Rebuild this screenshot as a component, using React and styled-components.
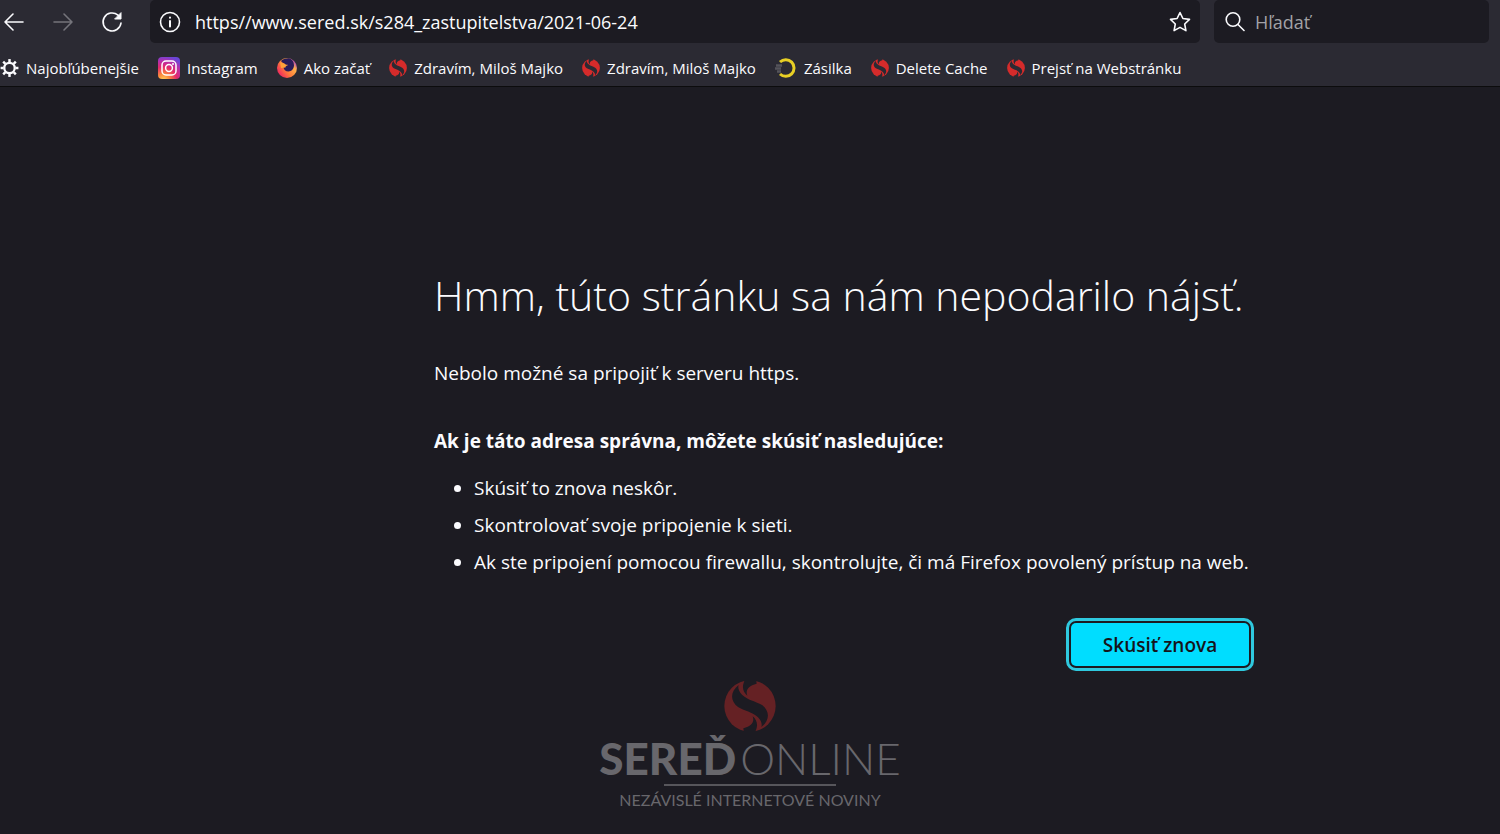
import React from "react";
import styled, { createGlobalStyle } from "styled-components";

const GlobalStyle = createGlobalStyle`
  * {
    box-sizing: border-box;
  }
  body {
    margin: 0;
    background: #1c1b22;
    color: #fbfbfe;
    font-family: "Open Sans", "Noto Sans", sans-serif;
  }
`

const Chrome = styled.header`
  background: #2b2a33;
  border-bottom: 1px solid #0c0c0d;
`

const Toolbar = styled.div`
  display: flex;
  align-items: center;
  height: 43px;
  padding-right: 11px;
`

const NavButtons = styled.div`
  display: flex;
  flex: none;
  gap: 21px;
  width: 150px;
`

const IconButton = styled.button`
  display: flex;
  align-items: center;
  justify-content: center;
  width: 28px;
  height: 28px;
  padding: 0;
  border: 0;
  background: none;
  color: ${props => props.disabled ? '#75747b' : '#fbfbfe'};
`

const Field = styled.label`
  display: flex;
  align-items: center;
  flex: ${props => props.width ? `0 0 ${props.width}` : '1'};
  gap: ${props => props.gap || '8px'};
  height: 43px;
  padding: 0 6px 0 9px;
  margin-left: ${props => props.width ? '14px' : '0'};
  border-radius: 5px;
  background: #1c1b22;
  input {
    flex: 1;
    min-width: 0;
    padding: 0;
    border: 0;
    outline: 0;
    background: none;
    color: #fbfbfe;
    font-family: inherit;
    font-size: 18px;
  }
  input::placeholder {
    color: #a2a2a6;
    opacity: 1;
  }
`

const Bookmarks = styled.nav`
  display: flex;
  align-items: center;
  gap: 19px;
  height: 43px;
  padding-top: 6px;
`

const Bookmark = styled.a`
  display: flex;
  align-items: center;
  gap: 7px;
  color: #fbfbfe;
  font-size: 15px;
  line-height: 24px;
  text-decoration: none;
  white-space: nowrap;
  svg {
    flex: none;
  }
`

const Main = styled.main`
  max-width: 1008px;
  margin: 0 auto;
  padding: 178px 0 0 188px;
`

const Title = styled.h1`
  margin: 0;
  font-size: 41px;
  font-weight: 300;
  line-height: 60px;
  white-space: nowrap;
`

const Text = styled.p`
  margin: ${props => props.$strong ? '40px 0 0' : '34px 0 0'};
  font-size: 19px;
  font-weight: ${props => props.$strong ? 700 : 400};
  line-height: 28px;
`

const Tips = styled.ul`
  margin: 15px 0 0;
  padding-left: 40px;
  font-size: 19px;
  line-height: 37px;
  white-space: nowrap;
`

const Actions = styled.div`
  display: flex;
  justify-content: flex-end;
  margin-top: 37px;
  padding: 5px;
`

const RetryButton = styled.button`
  width: 178px;
  height: 43px;
  border: 0;
  border-radius: 5px;
  background: #00ddff;
  color: #15141a;
  font-family: inherit;
  font-size: 19px;
  font-weight: 600;
  outline: 3px solid #2fc9df;
  outline-offset: 2px;
`

const Footer = styled.footer`
  display: flex;
  flex-direction: column;
  align-items: center;
  padding-top: 9px;
  color: #68676c;
  font-family: Lato, sans-serif;
`

const Brand = styled.div`
  display: flex;
  gap: 4px;
  font-size: 44px;
  line-height: 52px;
  font-weight: 300;
  strong {
    font-weight: 900;
  }
`

const Rule = styled.div`
  width: 172px;
  height: 2px;
  background: #57565b;
`

const Tagline = styled.div`
  font-size: 16px;
  line-height: 28px;
`

const SLogo = ({ size, color, gap }) => (
  <svg width={size} height={size} viewBox="2 1 156 156" aria-hidden="true">
    <circle cx="80" cy="79" r="77" fill={color} />
    <g fill={gap}>
      <path d="M46 16C20 36 20 64 44 82C62 93 88 97 104 113C114 123 117 134 114 142C140 122 140 94 116 76C98 65 72 61 56 45C46 35 43 24 46 16Z" />
      <path d="M66-2C54 20 58 36 72 48C66 32 74 18 100 12L98-2Z" />
      <path d="M66-2C54 20 58 36 72 48C66 32 74 18 100 12L98-2Z" transform="rotate(180 80 79)" />
    </g>
  </svg>
)

const Gear = () => (
  <svg width="19" height="20" viewBox="-10 -10 20 20" fill="none" stroke="#fbfbfe" aria-hidden="true">
    <circle r="5.5" strokeWidth="2.4" />
    {[0, 45, 90, 135, 180, 225, 270, 315].map(a => (
      <path key={a} d="M0-6.2V-9.4" strokeWidth="2.6" transform={`rotate(${a})`} />
    ))}
  </svg>
)

const Instagram = () => (
  <svg width="22" height="22" viewBox="0 0 22 22" aria-hidden="true">
    <defs>
      <radialGradient id="ig" cx="0.25" cy="1.05" r="1.1">
        <stop offset="0" stopColor="#ffd25a" />
        <stop offset="0.25" stopColor="#fb8a3c" />
        <stop offset="0.55" stopColor="#e5286c" />
        <stop offset="0.8" stopColor="#b52fae" />
        <stop offset="1" stopColor="#6a45d6" />
      </radialGradient>
    </defs>
    <rect width="22" height="22" rx="4" fill="url(#ig)" />
    <rect x="4" y="4" width="14" height="14" rx="4" fill="none" stroke="#fff" strokeWidth="1.5" />
    <circle cx="11" cy="11" r="3.4" fill="none" stroke="#fff" strokeWidth="1.5" />
    <circle cx="15" cy="7" r="1" fill="#fff" />
  </svg>
)

const Firefox = () => (
  <svg width="20" height="20" viewBox="0 0 20 20" aria-hidden="true">
    <defs>
      <linearGradient id="fx" x1="0.9" y1="0.2" x2="0.1" y2="0.8">
        <stop offset="0" stopColor="#b04ab8" />
        <stop offset="0.2" stopColor="#ffb24a" />
        <stop offset="0.6" stopColor="#ff7a3a" />
        <stop offset="1" stopColor="#f02a5e" />
      </linearGradient>
    </defs>
    <circle cx="10" cy="10" r="10" fill="url(#fx)" />
    <path d="M4 3C6 1 9 0 12 .3c3 .8 5 3.500 5 7C17 11 14.500 13.500 11.500 13.500S6.500 11.500 6.500 9c0-1.200.6-2.200 1.500-3C6.500 5 5 4.500 4 3z" fill="#2a1c5a" />
    <path d="M3 3.500C4 5 6 5 8 6c1 .7 2 .8 3.200 1C9.500 7.500 8.500 8 8.500 9.500L4 10z" fill="#ffa13a" />
  </svg>
)

const Parcel = () => (
  <svg width="22" height="20" viewBox="0 0 22 20" fill="none" aria-hidden="true">
    <path d="M5 4A8.300 8.300 0 1 1 5 16" stroke="#e8cf25" strokeWidth="3" />
    <path d="M1 7.500h6M0 10.500h6M2 13.500h4" stroke="#55545b" strokeWidth="2.4" />
  </svg>
)

const Favicon = () => <SLogo size={18} color="#d52b2b" gap="#2b2a33" />

const bookmarks = [
  { label: 'Najobľúbenejšie', icon: <Gear /> },
  { label: 'Instagram', icon: <Instagram /> },
  { label: 'Ako začať', icon: <Firefox /> },
  { label: 'Zdravím, Miloš Majko', icon: <Favicon /> },
  { label: 'Zdravím, Miloš Majko', icon: <Favicon /> },
  { label: 'Zásilka', icon: <Parcel /> },
  { label: 'Delete Cache', icon: <Favicon /> },
  { label: 'Prejsť na Webstránku', icon: <Favicon /> },
]

const Line = ({ children }) => (
  <svg width="22" height="22" viewBox="0 0 22 22" fill="none" stroke="currentColor" strokeWidth="1.6" strokeLinecap="round" strokeLinejoin="round" aria-hidden="true">
    {children}
  </svg>
)

export default function App() {
  return <>
    <GlobalStyle />
    <Chrome>
      <Toolbar>
        <NavButtons>
          <IconButton aria-label="Späť"><Line><path d="M20 11H2M10 3l-8 8 8 8" /></Line></IconButton>
          <IconButton aria-label="Dopredu" disabled><Line><path d="M2 11h18M12 3l8 8-8 8" /></Line></IconButton>
          <IconButton aria-label="Obnoviť"><Line><path d="M20 12A9 9 0 1 1 17 4.200L19 6.500" /><path d="M20 2v6h-6z" fill="currentColor" strokeWidth="1" /></Line></IconButton>
        </NavButtons>
        <Field gap="14px">
          <Line><circle cx="11" cy="11" r="9.500" /><path d="M11 10v5.500M11 6.500v.2" strokeWidth="2" /></Line>
          <input aria-label="Adresa" defaultValue="https//www.sered.sk/s284_zastupitelstva/2021-06-24" />
          <IconButton aria-label="Pridať záložku">
            <Line><path d="M11 1.500l2.900 6 6.600.9-4.800 4.600 1.200 6.600L11 16.400l-5.900 3.200 1.200-6.600L1.500 8.400l6.600-.9z" /></Line>
          </IconButton>
        </Field>
        <Field width="274px" gap="10px">
          <Line><circle cx="10" cy="8.500" r="6.800" /><path d="M15 13.500l6 6" /></Line>
          <input aria-label="Hľadať" placeholder="Hľadať" />
        </Field>
      </Toolbar>
      <Bookmarks>
        {bookmarks.map((b, i) => (
          <Bookmark href="#" key={i}>{b.icon}{b.label}</Bookmark>
        ))}
      </Bookmarks>
    </Chrome>
    <Main>
      <Title>Hmm, túto stránku sa nám nepodarilo nájsť.</Title>
      <Text>Nebolo možné sa pripojiť k serveru https.</Text>
      <Text $strong>Ak je táto adresa správna, môžete skúsiť nasledujúce:</Text>
      <Tips>
        <li>Skúsiť to znova neskôr.</li>
        <li>Skontrolovať svoje pripojenie k sieti.</li>
        <li>Ak ste pripojení pomocou firewallu, skontrolujte, či má Firefox povolený prístup na web.</li>
      </Tips>
      <Actions>
        <RetryButton>Skúsiť znova</RetryButton>
      </Actions>
    </Main>
    <Footer>
      <SLogo size={52} color="#652124" gap="#1c1b22" />
      <Brand><strong>SEREĎ</strong>ONLINE</Brand>
      <Rule />
      <Tagline>NEZÁVISLÉ INTERNETOVÉ NOVINY</Tagline>
    </Footer>
  </>
}
